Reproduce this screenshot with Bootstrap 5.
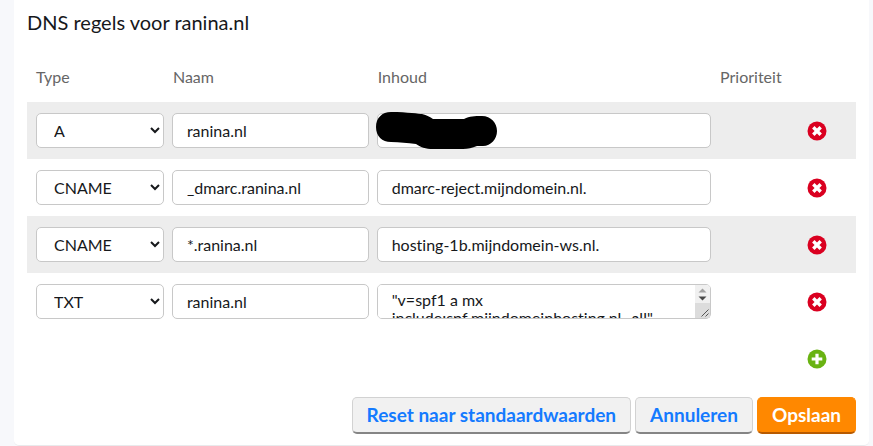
<!DOCTYPE html>
<html lang="nl">
<head>
<meta charset="utf-8">
<meta name="viewport" content="width=device-width, initial-scale=1">
<title>DNS regels voor ranina.nl</title>
<link href="https://cdn.jsdelivr.net/npm/bootstrap@5.3.0/dist/css/bootstrap.min.css" rel="stylesheet">
<style>
body { background: #f7f8fb; color: #16181b; font-family: Lato, "Liberation Sans", sans-serif; font-size: 16px; font-variant-ligatures: none; }
.panel { margin: 0 4px 0 14px; padding: 9px 13px 11px; background: #fff; border-bottom: 1px solid #e9eaec; border-radius: 0 0 5px 5px; }
.panel-title { font-size: 20px; line-height: 26px; margin-bottom: 18px; font-weight: 400; }
.dns { table-layout: fixed; line-height: 24px; }
.dns th { font-weight: 400; color: #666; padding: 12px 5px 13px; white-space: nowrap; }
.dns tbody td { padding: 11px 4px; height: 57px; vertical-align: middle; }
.dns th:first-child, .dns tbody td:first-child { padding-left: 9px; }
.dns tbody tr:nth-child(odd) { background: #ededed; }
.dns tbody tr.add-row { background: #fff; }
.c-type { width: 17%; } .c-name { width: 24.7%; } .c-content { width: 41.3%; } .c-prio { width: 7.6%; }
.field.form-control, .field.form-select { height: 35px; min-height: 35px; padding: 0 14px; border: 1px solid #c8c8c8; border-radius: 5px; font-size: 16px; line-height: 18px; color: #16181b; font-variant-ligatures: none; }
.field.form-select { appearance: auto; background-image: none; padding: 0 0 0 13px; }
textarea.field.form-control { display: block; padding: 6px 14px; resize: both; overflow-y: scroll; }
textarea::-webkit-resizer { background: #dcdcdc url("data:image/svg+xml,%3Csvg xmlns='http://www.w3.org/2000/svg' viewBox='0 0 15 15'%3E%3Cpath d='M6.5 13.5L13.5 6.5M10.5 13.5L13.5 10.5' stroke='%23555'/%3E%3C/svg%3E") center / 15px 15px no-repeat; }
.scroll-arrows { position: absolute; top: 1px; right: 1px; pointer-events: none; border-top-right-radius: 4px; }
.round-btn { display: flex; margin: 0 auto; padding: 0; border: 0; background: none; }
.cover { position: absolute; left: -1px; top: -2px; pointer-events: none; }
.actions { padding-top: 10px; }
.act { --bs-btn-font-size: 19px; --bs-btn-font-weight: 700; --bs-btn-padding-x: 14px; --bs-btn-padding-y: 4px; --bs-btn-line-height: 26px; --bs-btn-border-radius: 5px; border-bottom-width: 2px; }
.act-plain { --bs-btn-color: #147aff; --bs-btn-bg: #f1f1f1; --bs-btn-border-color: #d2d2d2; --bs-btn-hover-color: #147aff; --bs-btn-hover-bg: #e8e8e8; border-bottom-color: #858585; }
.act-main { --bs-btn-color: #fff; --bs-btn-bg: #ff8800; --bs-btn-border-color: #ff8800; --bs-btn-hover-color: #fff; --bs-btn-hover-bg: #f07f00; border-bottom-color: #b85a00; }
</style>
</head>
<body>
<svg class="d-none">
  <symbol id="remove" viewBox="0 0 20 20"><circle cx="10" cy="10" r="9.5" fill="#da0020"/><path d="M6.3 6.3l7.4 7.4M13.7 6.3l-7.4 7.4" stroke="#fff" stroke-width="3.4"/></symbol>
  <symbol id="add" viewBox="0 0 20 20"><circle cx="10" cy="10" r="9.5" fill="#69b312"/><path d="M10 4.7v10.6M4.7 10h10.6" stroke="#fff" stroke-width="3.2"/></symbol>
</svg>
<main class="panel">
  <h1 class="panel-title">DNS regels voor ranina.nl</h1>
  <form>
    <table class="dns w-100">
      <colgroup><col class="c-type"><col class="c-name"><col class="c-content"><col class="c-prio"><col></colgroup>
      <thead><tr><th scope="col">Type</th><th scope="col">Naam</th><th scope="col">Inhoud</th><th scope="col">Prioriteit</th><td></td></tr></thead>
      <tbody>
        <tr>
          <td><select class="form-select field" aria-label="Type"><option>A</option><option>CNAME</option><option>TXT</option></select></td>
          <td><input class="form-control field" aria-label="Naam" value="ranina.nl"></td>
          <td><div class="position-relative"><input class="form-control field" aria-label="Inhoud"><svg class="cover" width="121" height="38" viewBox="0 0 121 38"><path d="M15 1C32 1 43 3 46 3C51 4 54 6 57 8H88C94 5 98 5 106 5C115 5 121 12 121 20C121 28 115 35 107 35H101C96 37 92 38 87 38H57C50 38 44 36 40 33C31 32 24 31 15 31C6 31 0 25 0 16C0 7 6 1 15 1Z"/></svg></div></td>
          <td></td>
          <td><button type="button" class="round-btn" aria-label="Verwijderen"><svg width="20" height="20"><use href="#remove"/></svg></button></td>
        </tr>
        <tr>
          <td><select class="form-select field" aria-label="Type"><option>A</option><option selected>CNAME</option><option>TXT</option></select></td>
          <td><input class="form-control field" aria-label="Naam" value="_dmarc.ranina.nl"></td>
          <td><input class="form-control field" aria-label="Inhoud" value="dmarc-reject.mijndomein.nl."></td>
          <td></td>
          <td><button type="button" class="round-btn" aria-label="Verwijderen"><svg width="20" height="20"><use href="#remove"/></svg></button></td>
        </tr>
        <tr>
          <td><select class="form-select field" aria-label="Type"><option>A</option><option selected>CNAME</option><option>TXT</option></select></td>
          <td><input class="form-control field" aria-label="Naam" value="*.ranina.nl"></td>
          <td><input class="form-control field" aria-label="Inhoud" value="hosting-1b.mijndomein-ws.nl."></td>
          <td></td>
          <td><button type="button" class="round-btn" aria-label="Verwijderen"><svg width="20" height="20"><use href="#remove"/></svg></button></td>
        </tr>
        <tr>
          <td><select class="form-select field" aria-label="Type"><option>A</option><option>CNAME</option><option selected>TXT</option></select></td>
          <td><input class="form-control field" aria-label="Naam" value="ranina.nl"></td>
          <td><div class="position-relative"><textarea class="form-control field" aria-label="Inhoud">"v=spf1 a mx
include:spf.mijndomeinhosting.nl -all"</textarea><svg class="scroll-arrows" width="15" height="18"><path d="M0 0H15V18H0Z" fill="#f0f0f0"/><path d="M3.5 7.5L7.5 3.5L11.5 7.5Z" fill="#a0a0a0"/><path d="M3.5 11.5L7.5 15.5L11.5 11.5Z" fill="#484848"/></svg></div></td>
          <td></td>
          <td><button type="button" class="round-btn" aria-label="Verwijderen"><svg width="20" height="20"><use href="#remove"/></svg></button></td>
        </tr>
        <tr class="add-row">
          <td colspan="4"></td>
          <td><button type="button" class="round-btn" aria-label="Toevoegen"><svg width="20" height="20"><use href="#add"/></svg></button></td>
        </tr>
      </tbody>
    </table>
    <div class="actions d-flex justify-content-end gap-1">
      <button type="reset" class="btn act act-plain">Reset naar standaardwaarden</button>
      <button type="button" class="btn act act-plain">Annuleren</button>
      <button type="submit" class="btn act act-main">Opslaan</button>
    </div>
  </form>
</main>
<script src="https://cdn.jsdelivr.net/npm/bootstrap@5.3.0/dist/js/bootstrap.bundle.min.js"></script>
</body>
</html>
